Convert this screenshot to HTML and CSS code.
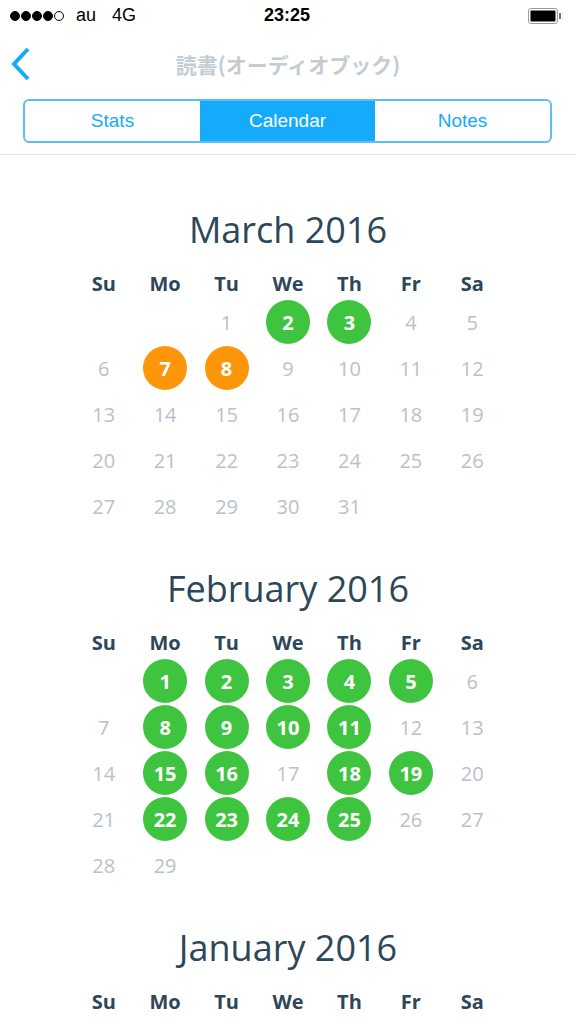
FILE: index.html
```html
<!DOCTYPE html>
<html lang="ja">
<head>
    <meta charset="UTF-8">
    <meta name="viewport" content="width=device-width, initial-scale=1.0">
    <title>読書(オーディオブック)</title>
    <link rel="stylesheet" href="styles.css">
</head>
<body>
    <div class="screen">
        <div class="status-bar">
            <div class="carrier">
                <span class="signal">
                    <i class="dot"></i><i class="dot"></i><i class="dot"></i><i class="dot"></i><i class="dot empty"></i>
                </span>
                <span>au</span>
                <span class="network">4G</span>
            </div>
            <div class="clock">23:25</div>
            <div class="battery">
                <svg width="34" height="16" viewBox="0 0 34 16">
                    <rect x="0.5" y="0.5" width="29" height="15" rx="2.5" fill="none" stroke="#9a9a9a"/>
                    <rect x="2.5" y="2.5" width="25" height="11" rx="1" fill="#000"/>
                    <rect x="31" y="5" width="2" height="6" fill="#777"/>
                </svg>
            </div>
        </div>

        <div class="nav-bar">
            <a class="back" href="#">
                <svg width="22" height="34" viewBox="0 0 22 34">
                    <polyline points="18,2 4,17 18,32" fill="none" stroke="#15abfa" stroke-width="4"/>
                </svg>
            </a>
            <div class="nav-title">読書(オーディオブック)</div>
            <div></div>
        </div>

        <div class="toolbar">
            <div class="segmented">
                <div class="segment">Stats</div>
                <div class="segment selected">Calendar</div>
                <div class="segment">Notes</div>
            </div>
        </div>

        <div class="content">
            <div class="month">
                <div class="month-title">March 2016</div>
                <div class="weekdays">
                    <span>Su</span><span>Mo</span><span>Tu</span><span>We</span><span>Th</span><span>Fr</span><span>Sa</span>
                </div>
                <div class="days">
                    <span></span><span></span><span>1</span><span class="done">2</span><span class="done">3</span><span>4</span><span>5</span>
                    <span>6</span><span class="skipped">7</span><span class="skipped">8</span><span>9</span><span>10</span><span>11</span><span>12</span>
                    <span>13</span><span>14</span><span>15</span><span>16</span><span>17</span><span>18</span><span>19</span>
                    <span>20</span><span>21</span><span>22</span><span>23</span><span>24</span><span>25</span><span>26</span>
                    <span>27</span><span>28</span><span>29</span><span>30</span><span>31</span>
                </div>
            </div>

            <div class="month">
                <div class="month-title">February 2016</div>
                <div class="weekdays">
                    <span>Su</span><span>Mo</span><span>Tu</span><span>We</span><span>Th</span><span>Fr</span><span>Sa</span>
                </div>
                <div class="days">
                    <span></span><span class="done">1</span><span class="done">2</span><span class="done">3</span><span class="done">4</span><span class="done">5</span><span>6</span>
                    <span>7</span><span class="done">8</span><span class="done">9</span><span class="done">10</span><span class="done">11</span><span>12</span><span>13</span>
                    <span>14</span><span class="done">15</span><span class="done">16</span><span>17</span><span class="done">18</span><span class="done">19</span><span>20</span>
                    <span>21</span><span class="done">22</span><span class="done">23</span><span class="done">24</span><span class="done">25</span><span>26</span><span>27</span>
                    <span>28</span><span>29</span>
                </div>
            </div>

            <div class="month">
                <div class="month-title">January 2016</div>
                <div class="weekdays">
                    <span>Su</span><span>Mo</span><span>Tu</span><span>We</span><span>Th</span><span>Fr</span><span>Sa</span>
                </div>
            </div>
        </div>
    </div>
</body>
</html>
```

FILE: styles.css
```css
body {
    margin: 0;
    background-color: #fff;
    font-family: "Liberation Sans", Arial, sans-serif;
}

.screen {
    height: 100vh;
    display: flex;
    flex-direction: column;
    overflow: hidden;
}

/* status bar */
.status-bar {
    flex-shrink: 0;
    height: 31px;
    display: grid;
    grid-template-columns: 1fr auto 1fr;
    align-items: center;
    padding: 0 14px 0 10px;
    font-size: 18px;
    color: #000;
}

.carrier {
    display: flex;
    align-items: center;
    gap: 12px;
}

.network {
    margin-left: 4px;
}

.signal {
    display: flex;
    gap: 1px;
}

.dot {
    width: 8px;
    height: 8px;
    border-radius: 50%;
    background-color: #000;
    border: 0.5px solid #000;
}

.dot.empty {
    background-color: transparent;
}

.clock {
    font-weight: bold;
    padding-left: 2px;
}

.battery {
    display: flex;
    justify-content: flex-end;
}

/* nav */
.nav-bar {
    flex-shrink: 0;
    height: 68px;
    display: grid;
    grid-template-columns: 1fr auto 1fr;
    align-items: center;
}

.back {
    display: flex;
    padding-left: 10px;
    padding-bottom: 2px;
}

.nav-title {
    font-family: "Noto Sans CJK JP", sans-serif;
    font-weight: bold;
    font-size: 21px;
    color: #c3ccd3;
    padding-bottom: 2px;
}

.toolbar {
    flex-shrink: 0;
    padding: 0 24px 11px 23px;
    border-bottom: 1px solid #e2e4e6;
}

.segmented {
    display: flex;
    height: 40px;
    border: 2px solid #5dbcf9;
    border-radius: 6px;
    overflow: hidden;
}

.segment {
    flex: 1;
    display: flex;
    align-items: center;
    justify-content: center;
    font-size: 19px;
    color: #15abfa;
}

.segment.selected {
    background-color: #15abfa;
    color: #fff;
}

/* calendar */
.content {
    flex: 1;
    min-height: 0;
    padding-top: 50px;
    font-family: "Open Sans", sans-serif;
}

.month {
    width: 430px;
    margin: 0 auto 35px;
}

.month-title {
    text-align: center;
    font-size: 36px;
    line-height: 50px;
    color: #2c4758;
    margin-bottom: 14px;
}

.weekdays, .days {
    display: grid;
    grid-template-columns: repeat(7, 1fr);
    text-align: center;
}

.weekdays span {
    line-height: 30px;
    font-size: 20px;
    font-weight: bold;
    color: #2d4658;
}

.days span {
    height: 46px;
    display: flex;
    align-items: center;
    justify-content: center;
    font-size: 20px;
    color: #b8c2ca;
}

.days .done, .days .skipped {
    width: 44px;
    height: 44px;
    margin: 1px auto;
    border-radius: 50%;
    color: #fff;
    font-weight: bold;
    background-color: #3fc43f;
}

.days .skipped {
    background-color: #fe960a;
}
```
